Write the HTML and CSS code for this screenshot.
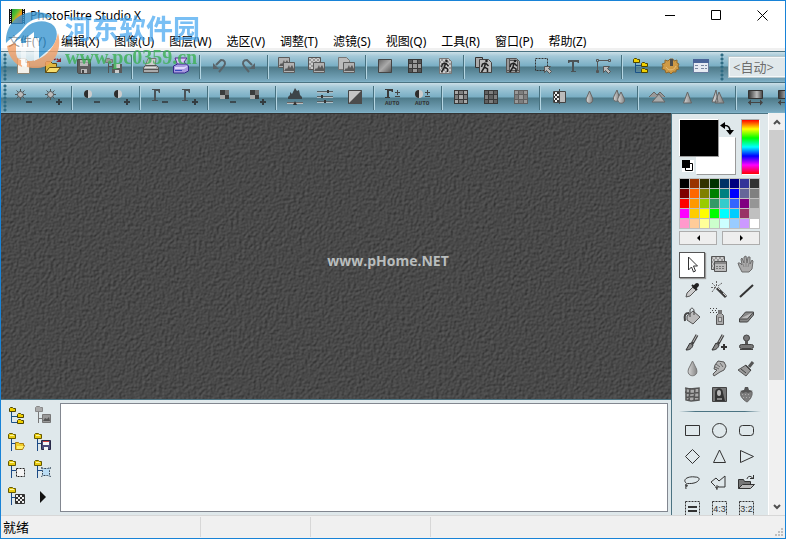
FILE: index.html
```html
<!DOCTYPE html>
<html lang="zh-CN">
<head>
<meta charset="utf-8">
<title>PhotoFiltre Studio X</title>
<link rel="stylesheet" href="styles.css">
</head>
<body>
<svg class="sprite" aria-hidden="true">
<defs>
<linearGradient id="g-metal" x1="0" y1="0" x2="1" y2="1"><stop offset="0" stop-color="#666"/><stop offset=".5" stop-color="#aaa"/><stop offset="1" stop-color="#555"/></linearGradient>
<linearGradient id="g-drop" x1="0" y1="0" x2="1" y2="0"><stop offset="0" stop-color="#d8d8d8"/><stop offset="1" stop-color="#848484"/></linearGradient>
<linearGradient id="g-bar" x1="0" y1="0" x2="1" y2="0"><stop offset="0" stop-color="#333"/><stop offset=".6" stop-color="#bbb"/><stop offset="1" stop-color="#444"/></linearGradient>
<linearGradient id="g-app" x1="0" y1="0" x2="1" y2="1"><stop offset="0" stop-color="#1c9a3a"/><stop offset=".35" stop-color="#5ac030"/><stop offset=".6" stop-color="#f4a01c"/><stop offset="1" stop-color="#e6341a"/></linearGradient>
<pattern id="p-check" width="4" height="4" patternUnits="userSpaceOnUse"><path fill="#ccc" d="M0 0h4v4H0z"/><path fill="#999" d="M0 0h2v2H0zM2 2h2v2H2z"/></pattern>
<pattern id="p-dark" width="4" height="4" patternUnits="userSpaceOnUse"><path fill="#eee" d="M0 0h4v4H0z"/><path fill="#333" d="M0 0h2v2H0zM2 2h2v2H2z"/></pattern>
</defs>
<symbol id="app" viewBox="0 0 16 16"><path fill="#111" d="M0 1h16v15H0z"/><path fill="url(#g-app)" d="M3 1h10v14H3z"/><path stroke="#ddd" stroke-dasharray="1 1" d="M1.500 1v15M14.500 1v15"/></symbol>
<symbol id="minus" viewBox="0 0 24 24"><path fill="#3c4a50" d="M15 15h6v2h-6z"/></symbol>
<symbol id="plus" viewBox="0 0 24 24"><path fill="#333c40" d="M15 15h6v2h-6zM17 13h2v6h-2z"/></symbol>
<symbol id="branch" viewBox="0 0 24 24"><path stroke="#1b4a86" fill="none" d="M7.500 8v9M8 12.500h4M7.500 17v3" /><path fill="#e9cc12" stroke="#665900" d="M4.500 3.500l1-1h3l1 1h2v4h-7z"/><path stroke="#fff59a" d="M6 4.500h4"/></symbol>
<symbol id="image" viewBox="0 0 24 24"><path fill="#b2b2b2" stroke="#5c5c5c" d="M.5.5h11v10H.5z"/><path fill="#5a5a5a" d="M1 9l2-3 1 1 2-4 1 3 2-3 2 4v2z"/></symbol>
<symbol id="man" viewBox="0 0 24 24"><path fill="none" stroke="#222" stroke-width="1.500" d="M6 4L5 8l3 2v3M5 8l-3 5M6 4L3 5 2 8M6 4l3 3"/><circle cx="7" cy="2" r="1.300" fill="#222"/></symbol>
<symbol id="i-new" viewBox="0 0 24 24"><path fill="#f3f1ea" stroke="#8d8777" d="M6.500 3.500h8l4 4v11h-12z"/><path fill="#cfc6b4" stroke="#8d8777" d="M14.500 3.500v4h4z"/></symbol>
<symbol id="i-open" viewBox="0 0 24 24"><path fill="#dfb840" stroke="#5e4a10" d="M4.500 17.500v-10l1-1h4l2 2h4v3"/><path fill="#f7dc6a" stroke="#5e4a10" d="M4.500 17.500l4-5h11l-4 5z"/><path fill="none" stroke="#8c2430" stroke-width="1.400" stroke-dasharray="2 1" d="M13 5c2-2 4-1 5 1"/><path fill="#8c2430" d="M15 7h5V3z"/></symbol>
<symbol id="i-save" viewBox="0 0 24 24"><path fill="#5e5e5e" stroke="#4c4c4c" d="M6.500 4.500h13v14h-12l-1-1z"/><path fill="#b8b8b8" d="M9 5h8v6H9z"/><path fill="#999" d="M9 7h8v1H9z"/><path fill="#b8b8b8" d="M10 14h6v4h-6z"/><path fill="#444" d="M11 15h2v3h-2z"/></symbol>
<symbol id="i-treesave" viewBox="0 0 24 24"><path fill="none" stroke="#555" d="M7.500 8v10M8 11.500h3"/><path fill="#999" stroke="#777" d="M4.500 4.500l1-1h3l1 1h2v3h-7z"/><path fill="#5a5a5a" d="M11 9h10v9H11z"/><path fill="#ccc" d="M13 9h6v4h-6zM14 15h4v3h-4z"/></symbol>
<symbol id="i-print" viewBox="0 0 24 24"><path fill="#ccc" stroke="#777" d="M9 3.500h8l-1 8H6z"/><path fill="#aaa" stroke="#555" d="M4.500 12.500l2-2h11l2 2v5h-15z"/><path stroke="#555" d="M4 14.500h15"/><path stroke="#ddd" d="M6 12.500h11"/></symbol>
<symbol id="i-scan" viewBox="0 0 24 24"><path fill="#d8c8f8" stroke="#5a2890" d="M6 3h12l-3 4 3 4H9z"/><path fill="#a79ae0" stroke="#35288c" d="M4.500 11l4-2h9l2 2v5l-4 2h-11z"/><path fill="#ded8fc" d="M6 12h9l3-1v1l-3 2H6z"/><path fill="#3848b8" d="M6 15h7v1H6z"/></symbol>
<symbol id="i-undo" viewBox="0 0 24 24"><path fill="none" stroke="#59646a" stroke-width="2" d="M9 10l5-5c4 0 5 3 3 6l-5 6"/><path fill="#59646a" d="M6 8v6h6z"/></symbol>
<symbol id="i-redo" viewBox="0 0 24 24"><path fill="none" stroke="#59646a" stroke-width="2" d="M15 10l-5-5C6 5 5 8 7 11l5 6"/><path fill="#59646a" d="M18 8v6h-6z"/></symbol>
<symbol id="i-dup" viewBox="0 0 24 24"><use href="#image" x="3" y="2" width="24" height="24"/><use href="#image" x="8" y="7" width="24" height="24"/></symbol>
<symbol id="i-check" viewBox="0 0 24 24"><path fill="url(#p-check)" stroke="#555" d="M3.500 2.500h12v12h-12z"/><use href="#image" x="8" y="7" width="24" height="24"/></symbol>
<symbol id="i-paste" viewBox="0 0 24 24"><path fill="#bbb" stroke="#777" d="M3.500 2.500h8l3 3v9h-11z"/><use href="#image" x="8" y="7" width="24" height="24"/></symbol>
<symbol id="i-grad" viewBox="0 0 24 24"><path fill="url(#g-metal)" stroke="#444" d="M5.500 4.500h13v13h-13z"/></symbol>
<symbol id="i-grid" viewBox="0 0 24 24"><path fill="#383838" d="M5 4h14v14H5z"/><path fill="#555" d="M6 5h3v3H6zM15 5h3v3h-3zM6 14h3v3H6zM15 14h3v3h-3z"/><path fill="#999" d="M10 5h4v3h-4zM6 9h3v4H6zM15 9h3v4h-3zM10 14h4v3h-4zM10 9h4v4h-4z"/></symbol>
<symbol id="i-grid2" viewBox="0 0 24 24"><path fill="#383838" d="M5 4h14v14H5z"/><path fill="#a8a8a8" d="M6 5h3v3H6zM15 5h3v3h-3zM6 14h3v3H6zM15 14h3v3h-3zM10 9h4v4h-4z"/><path fill="#7e7e7e" d="M10 5h4v3h-4zM6 9h3v4H6zM15 9h3v4h-3zM10 14h4v3h-4z"/></symbol>
<symbol id="i-grid3" viewBox="0 0 24 24"><path fill="#383838" d="M5 4h14v14H5z"/><path fill="#606060" d="M6 5h3v3H6zM15 5h3v3h-3zM6 14h3v3H6zM15 14h3v3h-3zM10 9h4v4h-4z"/><path fill="#7e7e7e" d="M10 5h4v3h-4zM6 9h3v4H6zM15 9h3v4h-3zM10 14h4v3h-4z"/></symbol>
<symbol id="i-grid4" viewBox="0 0 24 24"><path fill="#606060" d="M5 4h14v14H5z"/><path fill="#999" d="M6 5h3v3H6zM15 5h3v3h-3zM6 14h3v3H6zM15 14h3v3h-3zM10 9h4v4h-4z"/><path fill="#7e7e7e" d="M10 5h4v3h-4zM6 9h3v4H6zM15 9h3v4h-3zM10 14h4v3h-4z"/></symbol>
<symbol id="i-man" viewBox="0 0 24 24"><path fill="url(#p-check)" stroke="#777" d="M6.500 3.500h9l3 3v12h-12z"/><use href="#man" x="6.500" y="4" width="24" height="24"/></symbol>
<symbol id="i-man2" viewBox="0 0 24 24"><path fill="#aaa" stroke="#333" d="M4.500 2.500h7v10h-7z"/><path fill="#bbb" stroke="#444" d="M8.500 4.500h9l3 3v10h-12z"/><use href="#man" x="8.500" y="4" width="24" height="24"/></symbol>
<symbol id="i-man3" viewBox="0 0 24 24"><path fill="#999" stroke="#555" d="M5.500 3.500h10l3 3v11h-13z"/><path fill="#bbb" stroke="#555" d="M8.500 5.500h8v10h-8z"/><path stroke="#555" d="M5 15.500h14M8.500 3v15"/><use href="#man" x="7" y="4" width="24" height="24"/></symbol>
<symbol id="arrow" viewBox="0 0 24 24"><path fill="#bbb" stroke="#555" d="M.5.5h6l-2 2 3 3-2 2-3-3-2 2z"/></symbol>
<symbol id="i-sel" viewBox="0 0 24 24"><path fill="none" stroke="#333" stroke-dasharray="2 1" d="M4.500 3.500h12v12h-12z"/><use href="#arrow" x="13" y="11" width="24" height="24"/></symbol>
<symbol id="i-text" viewBox="0 0 24 24"><path fill="#4c5356" d="M7 5h11v3h-1l-1-1h-3v9h2v1h-5v-1h1V7H9L8 8H7z"/></symbol>
<symbol id="i-node" viewBox="0 0 24 24"><path fill="none" stroke="#555" d="M6.500 6v11M8 5.500h10M5.500 4.500h2v2h-2zM17.500 4.500h2v2h-2zM5.500 15.500h2v2h-2z"/><use href="#arrow" x="12" y="11" width="24" height="24"/></symbol>
<symbol id="i-tree" viewBox="0 0 24 24"><path fill="none" stroke="#1b5288" d="M6.500 6v11.500H13M7 10.500h6"/><path fill="#f0d000" stroke="#4e4500" d="M4.500 4.500l1-1h2l1 1h2v3h-6zM12.500 8.500l1-1h2l1 1h2v3h-6zM12.500 14.500l1-1h2l1 1h2v3h-6z"/></symbol>
<symbol id="i-gear" viewBox="0 0 24 24"><path fill="#cf9a45" stroke="#8e6a30" stroke-linejoin="round" d="M11 4h3l1 2 3-1v3l2 1-1 2 1 3-3 1v2h-3l-2 2-2-2-3 1-1-3-3-1 1-3-1-2 3-1V5l3 1z"/><path fill="#4c4c4c" d="M11 4h3v7h-3z"/><path stroke="#e8c07a" fill="none" d="M7 12c2 4 8 4 10-1"/></symbol>
<symbol id="i-win" viewBox="0 0 24 24"><path fill="#e6eaf2" stroke="#667b9d" d="M4.500 4.500h15v13h-15z"/><path fill="#4a6498" d="M4 4h16v4H4z"/><path stroke="#7b88a0" stroke-dasharray="3 1" d="M6 10.500h4M12 10.500h6M6 13.500h4M12 13.500h6"/></symbol>
<symbol id="sun" viewBox="0 0 24 24"><path stroke="#505658" d="M9.500 3v11M4 8.500h11M5.500 4.500l8 8M13.500 4.500l-8 8"/><circle cx="9.500" cy="8.500" r="3" fill="#bbb" stroke="#505658"/></symbol>
<symbol id="i-sunm" viewBox="0 0 24 24"><use href="#sun"/><use href="#minus"/></symbol>
<symbol id="i-sunp" viewBox="0 0 24 24"><use href="#sun"/><use href="#plus"/></symbol>
<symbol id="half" viewBox="0 0 24 24"><circle cx="9" cy="8" r="4" fill="#ccc"/><path fill="#2c2c2c" d="M9 4a4 4 0 0 0 0 8z"/></symbol>
<symbol id="i-conm" viewBox="0 0 24 24"><use href="#half"/><use href="#minus"/></symbol>
<symbol id="i-conp" viewBox="0 0 24 24"><use href="#half"/><use href="#plus"/></symbol>
<symbol id="gamma" viewBox="0 0 24 24"><path fill="#4a5357" d="M5 3h8v4h-1l-1-2H9v9h2v1H5v-1h2V4H5z"/></symbol>
<symbol id="i-gamm" viewBox="0 0 24 24"><use href="#gamma"/><use href="#minus"/></symbol>
<symbol id="i-gamp" viewBox="0 0 24 24"><use href="#gamma"/><use href="#plus"/></symbol>
<symbol id="quad" viewBox="0 0 24 24"><path fill="#3c3c3c" d="M5 4h5v5H5zM10 9h4v4h-4z"/><path fill="#aaa" d="M5 9h5v4H5z"/><path fill="#707070" d="M10 4h4v5h-4z"/></symbol>
<symbol id="i-satm" viewBox="0 0 24 24"><use href="#quad"/><use href="#minus"/></symbol>
<symbol id="i-satp" viewBox="0 0 24 24"><use href="#quad"/><use href="#plus"/></symbol>
<symbol id="i-hist" viewBox="0 0 24 24"><path fill="#3d4549" d="M5 13v-2l2-2V6l2 2 3-6 2 3 2-1 1 5 2 2v2z"/><path stroke="#666" d="M4 16.500h16"/><path stroke="#bbb" d="M4 17.500h16"/><path fill="#333" d="M12 15l-2 4h4z"/></symbol>
<symbol id="i-slide" viewBox="0 0 24 24"><path stroke="#566064" d="M4 5.500h16M4 10.500h16M4 15.500h16"/><path stroke="#aebcc2" d="M4 6.500h16M4 11.500h16M4 16.500h16"/><path fill="#333" d="M14 4h2v3h-2zM8 9h2v3H8zM11 14h2v3h-2z"/></symbol>
<symbol id="i-neg" viewBox="0 0 24 24"><path fill="#c4c4c4" stroke="#444" d="M5.500 4.500h13v13h-13z"/><path fill="#4c4c4c" d="M19 4v14H5z"/></symbol>
<symbol id="auto" viewBox="0 0 24 24"><path stroke="#444" d="M14 6.500h5M16.500 4v5M14 10.500h5"/><text class="auto" x="4" y="19">AUTO</text></symbol>
<symbol id="i-gama" viewBox="0 0 24 24"><path fill="#3a3a3a" d="M4 3h8v3h-1l-1-1H8v6h1v1H4v-1h2V4H4z"/><use href="#auto"/></symbol>
<symbol id="i-cona" viewBox="0 0 24 24"><use href="#half" x="-1"/><use href="#auto"/></symbol>
<symbol id="i-mirror" viewBox="0 0 24 24"><path fill="url(#p-dark)" stroke="#444" d="M6.500 5.500h6v11h-6z"/><path fill="#bbb" stroke="#444" d="M12.500 5.500h6v11h-6z"/><path stroke="#444" d="M12.500 3v15"/></symbol>
<symbol id="i-drop" viewBox="0 0 24 24"><path fill="url(#g-drop)" stroke="#666" d="M12.500 5l-3 7c-2 7 8 7 6 0z"/></symbol>
<symbol id="i-drops" viewBox="0 0 24 24"><path fill="url(#g-drop)" stroke="#666" d="M10 4l-3 6c-3 7 7 7 5 0z"/><path fill="url(#g-drop)" stroke="#666" d="M14 6l-3 6c-2 7 9 7 6 0z"/></symbol>
<symbol id="i-mount" viewBox="0 0 24 24"><path fill="#999" stroke="#666" d="M4 11l5-5 3 3 3-3 5 5"/><path fill="#aaa" stroke="#666" d="M7 16l7-8 6 8z"/></symbol>
<symbol id="i-cone" viewBox="0 0 24 24"><path fill="url(#g-drop)" stroke="#666" d="M12.500 6l-4 11h8z"/></symbol>
<symbol id="i-cones" viewBox="0 0 24 24"><path fill="url(#g-drop)" stroke="#666" d="M11 4L7 16h6zM14 6l-4 11h9z"/></symbol>
<symbol id="i-bar" viewBox="0 0 24 24"><path fill="url(#g-bar)" stroke="#333" d="M5.500 4.500h14v8h-14z"/><path stroke="#444" d="M5 16.500h14"/><path fill="#444" d="M5 16.500l3-3v6zM20 16.500l-3-3v6z"/></symbol>
<symbol id="i-cursor" viewBox="0 0 24 24"><path fill="#fff" stroke="#333" d="M8.500 4v13l3-3 2 5 2-1-2-5h4z"/></symbol>
<symbol id="i-layer" viewBox="0 0 24 24"><path fill="url(#p-check)" stroke="#555" d="M4.500 3.500h13v13h-13z"/><path fill="#bbb" stroke="#555" d="M7.500 8.500h12v10h-12z"/><path fill="#888" d="M8 9h11v2H8z"/><path stroke="#777" stroke-dasharray="2 1" d="M9 13.500h9M9 15.500h8"/></symbol>
<symbol id="i-hand" viewBox="0 0 24 24"><path fill="#aaa" stroke="#6c6c6c" d="M8 19l-3-6-1-3 2 0 2 2-1-6 1-1 2 5V4l2-1 1 7 1-6 2 0v7l2-4 1 1-1 8-3 3z"/><path stroke="#888" fill="none" d="M9 11l1 3M12 10v4M15 10l-1 4"/></symbol>
<symbol id="i-pick" viewBox="0 0 24 24"><path fill="#ccc" stroke="#555" d="M6 18l1-4 6-6 3 3-6 6z"/><path stroke="#222" stroke-width="4" stroke-linecap="round" d="M15 8l2-2"/><path stroke="#222" stroke-width="2" d="M12 6l5 5"/></symbol>
<symbol id="i-wand" viewBox="0 0 24 24"><path stroke="#3c3c3c" stroke-width="3" d="M10 9l9 9"/><path stroke="#ccc" d="M10 8l3 3M16 14l3 3"/><path stroke="#666" stroke-dasharray="2 1" d="M9.500 2v5M4 8.500h5M5 4l4 4M15 4l-4 3M5 13l3-4"/></symbol>
<symbol id="i-line" viewBox="0 0 24 24"><path stroke="#333" stroke-width="2" d="M6 18L19 6"/></symbol>
<symbol id="i-bucket" viewBox="0 0 24 24"><path fill="#bbb" stroke="#555" d="M7 11l6-5 7 6-7 7-6-4z"/><path fill="none" stroke="#444" d="M10 12V5c1-3 4-2 4 1v4"/><path fill="none" stroke="#444" stroke-width="2" d="M9 8c-4 0-5 2-4 8"/></symbol>
<symbol id="i-spray" viewBox="0 0 24 24"><path fill="#aaa" stroke="#555" d="M9.500 10.500l2-2h3l2 2v9h-7z"/><path fill="#777" d="M11 5h4v4h-4zM11 12h4v5h-4z"/><path fill="#ccc" d="M12 13h2v3h-2z"/><path stroke="#444" stroke-dasharray="1 2" d="M3 3.500h8M5 5.500h5M3 7.500h8"/></symbol>
<symbol id="i-eraser" viewBox="0 0 24 24"><path fill="#888" stroke="#444" d="M5.500 14l6-7h8v3l-6 7h-8z"/><path fill="#bbb" stroke="#444" d="M5.500 14h8l6-7"/></symbol>
<symbol id="i-brush" viewBox="0 0 24 24"><path stroke="#444" stroke-width="3" d="M17 4l-5 9"/><path stroke="#bbb" d="M17 4l-4 7"/><path fill="#888" stroke="#333" d="M10 12l3 2c-1 4-4 5-7 5z"/></symbol>
<symbol id="i-brushp" viewBox="0 0 24 24"><path stroke="#444" stroke-width="3" d="M16 4l-5 9"/><path stroke="#bbb" d="M16 4l-4 7"/><path fill="#888" stroke="#333" d="M9 12l3 2c-1 4-4 5-7 5z"/><path fill="#333" d="M14 15h6v2h-6zM16 13h2v6h-2z"/></symbol>
<symbol id="i-stamp" viewBox="0 0 24 24"><circle cx="12.500" cy="7" r="3" fill="#777" stroke="#444"/><path fill="#555" d="M11 10h3v4h-3z"/><rect x="5.500" y="13.500" width="14" height="4" rx="2" fill="#777" stroke="#444"/><path stroke="#444" d="M6 18.500h13"/></symbol>
<symbol id="i-water" viewBox="0 0 24 24"><path fill="url(#g-drop)" stroke="#777" d="M12.500 4l-4 8c-3 9 11 9 8 0z"/></symbol>
<symbol id="i-finger" viewBox="0 0 24 24"><path fill="#b5b5b5" stroke="#555" d="M11 4l6 1 2 4-2 4-4 2-6 4-1-2 4-4-3-1 1-4z"/><path fill="none" stroke="#666" d="M9 7l4 3M13 6l3 4M8 10l4 2"/></symbol>
<symbol id="i-pbrush" viewBox="0 0 24 24"><path stroke="#555" stroke-width="3" d="M19 5l-4 5"/><path fill="#999" stroke="#555" d="M12 8l5 5-5 6-8-6z"/><path stroke="#444" d="M11 8l6 6M7 12l5 4"/></symbol>
<symbol id="i-mesh" viewBox="0 0 24 24"><path fill="#aaa" d="M6 5h13v12H6z"/><path fill="none" stroke="#555" stroke-width="1.500" d="M5 5l5 1 9-1v12l-8 1-5-1V5M10 5l-1 13M15 5l-1 13M5 9.500l6 1 8-1M6 14.500l7-1 6 1"/></symbol>
<symbol id="i-mona" viewBox="0 0 24 24"><path fill="#777" stroke="#444" d="M5.500 4.500h14v14h-14z"/><path fill="#333" d="M8 18V9c1-5 8-5 8 1l2 8z"/><ellipse cx="12" cy="10" rx="2" ry="3" fill="#bbb"/><path fill="#888" d="M10 15h5v2h-5z"/></symbol>
<symbol id="i-berry" viewBox="0 0 24 24"><path fill="#7c7c7c" stroke="#666" d="M7 9c3-2 8-2 11 0 1 4-3 9-5 10-4-2-8-7-6-10z"/><path fill="#555" d="M6 8l4-1 1-3h3l1 3 4 1-5 2-2-1-3 1z"/><path stroke="#aaa" stroke-dasharray="1 2" d="M8 11.500h9M9 14.500h7"/></symbol>
<symbol id="s-rect" viewBox="0 0 24 24"><path d="M5.500 7.500h14v10h-14z"/></symbol>
<symbol id="s-circ" viewBox="0 0 24 24"><circle cx="12.500" cy="12.500" r="7"/></symbol>
<symbol id="s-round" viewBox="0 0 24 24"><rect x="5.500" y="7.500" width="14" height="10" rx="3"/></symbol>
<symbol id="s-dia" viewBox="0 0 24 24"><path d="M12.500 5.500l7 7-7 7-7-7z"/></symbol>
<symbol id="s-tri" viewBox="0 0 24 24"><path d="M12.500 6l6 12.500h-12z"/></symbol>
<symbol id="s-tri2" viewBox="0 0 24 24"><path d="M6.500 6.500l13 6-13 6z"/></symbol>
<symbol id="s-lasso" viewBox="0 0 24 24"><path d="M6 13c-4-4 3-7 9-6 7 0 4 5-1 6-3 1-6 0-8 1-2 3 3 3 1 1-2 0-1 3-1 4"/></symbol>
<symbol id="s-poly" viewBox="0 0 24 24"><path d="M8 16l-4-4 5-4 3 3 6-5v11h-6c-2-2-4-1-3 1 2 1 3-1 1-1-1 1 0 2 0 3"/></symbol>
<symbol id="s-open" viewBox="0 0 24 24"><path fill="#777" d="M4.500 18.500v-9h5l1 2h6v3"/><path fill="#bbb" d="M4.500 18.500l4-4h12l-4 4z"/><path d="M13 9c1-4 5-3 6 0M16 8.500h4M19.500 5v4"/></symbol>
<symbol id="s-eq" viewBox="0 0 24 24"><path stroke-dasharray="2 1" d="M5.500 5.500h14v14h-14z"/><path stroke-width="2" d="M8 11h9M8 15h9"/></symbol>
<symbol id="s-43" viewBox="0 0 24 24"><path stroke-dasharray="2 1" d="M5.500 5.500h14v14h-14z"/><text class="ratio" x="12.500" y="16">4:3</text></symbol>
<symbol id="s-32" viewBox="0 0 24 24"><path stroke-dasharray="2 1" d="M5.500 5.500h14v14h-14z"/><text class="ratio" x="12.500" y="16">3:2</text></symbol>
<symbol id="b-tree" viewBox="0 0 24 24"><path fill="none" stroke="#1b5288" d="M7.500 6v12.500H13M8 12.500h5"/><path fill="#f0d000" stroke="#4e4500" d="M5.500 4.500l1-1h2l1 1h2v3h-6zM13.500 10.500l1-1h2l1 1h2v3h-6zM13.500 16.500l1-1h2l1 1h2v3h-6z"/></symbol>
<symbol id="b-img" viewBox="0 0 24 24"><path fill="none" stroke="#777" d="M8.500 8v11M9 14.500h3"/><path fill="#aaa" stroke="#888" d="M5.500 3.500l1-1h3l1 1h2v4h-7z"/><path fill="#999" stroke="#777" d="M12.500 10.500h8v8h-8z"/><path fill="#555" d="M13 17l2-3 2 1 2-2 1 4z"/></symbol>
<symbol id="b-open" viewBox="0 0 24 24"><use href="#branch"/><path fill="#f2cd28" stroke="#a87c10" d="M11.500 18.500v-7h3l1 1h4v2h1l-2 4z"/><path fill="#fff06c" d="M13 15h7l-2 3h-5z"/></symbol>
<symbol id="b-save" viewBox="0 0 24 24"><use href="#branch"/><path fill="#4c4a78" stroke="#292947" d="M11.500 9.500h9v9h-9z"/><path fill="#f6f6f6" d="M13 10h6v4h-6zM14 16h4v3h-4z"/><path fill="#d04040" d="M13 10h6v1h-6z"/></symbol>
<symbol id="b-sel" viewBox="0 0 24 24"><use href="#branch"/><path fill="#f4f4f4" stroke="#222" stroke-dasharray="2 1" d="M12.500 10.500h8v8h-8z"/></symbol>
<symbol id="b-fill" viewBox="0 0 24 24"><use href="#branch"/><path fill="#b9dcf4" stroke="#345" stroke-dasharray="2 1" d="M11.500 9.500l2 1h4l3-1-1 3v4l1 2-3-1h-4l-2 1 1-2v-4z"/></symbol>
<symbol id="b-check" viewBox="0 0 24 24"><use href="#branch"/><path fill="url(#p-dark)" stroke="#333" d="M11.500 9.500h9v9h-9z"/></symbol>
<symbol id="b-play" viewBox="0 0 24 24"><path fill="#111" d="M10 6l6 6-6 6z"/></symbol>
</svg>

<div class="window">
  <header class="titlebar">
    <svg class="app-icon"><use href="#app"/></svg>
    <h1 class="title">PhotoFiltre Studio X</h1>
    <button class="caption" aria-label="最小化"><svg viewBox="0 0 11 11"><path d="M0 5.500h10"/></svg></button>
    <button class="caption" aria-label="最大化"><svg viewBox="0 0 11 11"><path d="M.5.5h9v9h-9z"/></svg></button>
    <button class="caption" aria-label="关闭"><svg viewBox="0 0 11 11"><path d="M.5.5l10 10M10.500.5l-10 10"/></svg></button>
  </header>
  <nav class="menu">
    <button>文件(Y)</button><button>编辑(X)</button><button>图像(U)</button><button>图层(W)</button><button>选区(V)</button><button>调整(T)</button><button>滤镜(S)</button><button>视图(Q)</button><button>工具(R)</button><button>窗口(P)</button><button>帮助(Z)</button>
  </nav>
  <div class="toolbar">
    <span class="grip"></span>
    <button class="tool" aria-label="新建"><svg><use href="#i-new"/></svg></button>
    <button class="tool" aria-label="打开"><svg><use href="#i-open"/></svg></button>
    <button class="tool" aria-label="保存"><svg><use href="#i-save"/></svg></button>
    <button class="tool" aria-label="另存"><svg><use href="#i-treesave"/></svg></button>
    <span class="sep"></span>
    <button class="tool" aria-label="打印"><svg><use href="#i-print"/></svg></button>
    <button class="tool" aria-label="扫描"><svg><use href="#i-scan"/></svg></button>
    <span class="sep"></span>
    <button class="tool" aria-label="撤销"><svg><use href="#i-undo"/></svg></button>
    <button class="tool" aria-label="重做"><svg><use href="#i-redo"/></svg></button>
    <span class="sep"></span>
    <button class="tool" aria-label="复制图像"><svg><use href="#i-dup"/></svg></button>
    <button class="tool" aria-label="透明图像"><svg><use href="#i-check"/></svg></button>
    <button class="tool" aria-label="粘贴图像"><svg><use href="#i-paste"/></svg></button>
    <span class="sep"></span>
    <button class="tool" aria-label="灰度"><svg><use href="#i-grad"/></svg></button>
    <button class="tool" aria-label="索引颜色"><svg><use href="#i-grid"/></svg></button>
    <button class="tool" aria-label="透明色"><svg><use href="#i-man"/></svg></button>
    <span class="sep"></span>
    <button class="tool" aria-label="图像大小"><svg><use href="#i-man2"/></svg></button>
    <button class="tool" aria-label="画布大小"><svg><use href="#i-man3"/></svg></button>
    <button class="tool" aria-label="选择"><svg><use href="#i-sel"/></svg></button>
    <button class="tool" aria-label="文字"><svg><use href="#i-text"/></svg></button>
    <button class="tool" aria-label="路径"><svg><use href="#i-node"/></svg></button>
    <span class="sep"></span>
    <button class="tool" aria-label="浏览器"><svg><use href="#i-tree"/></svg></button>
    <button class="tool" aria-label="设置"><svg><use href="#i-gear"/></svg></button>
    <button class="tool" aria-label="窗口"><svg><use href="#i-win"/></svg></button>
    <span class="grip grip-mid"></span>
    <select class="zoom" aria-label="缩放"><option>&lt;自动&gt;</option></select>
  </div>
  <div class="toolbar">
    <span class="grip"></span>
    <button class="tool" aria-label="降低亮度"><svg><use href="#i-sunm"/></svg></button>
    <button class="tool" aria-label="提高亮度"><svg><use href="#i-sunp"/></svg></button>
    <span class="sep"></span>
    <button class="tool" aria-label="降低对比度"><svg><use href="#i-conm"/></svg></button>
    <button class="tool" aria-label="提高对比度"><svg><use href="#i-conp"/></svg></button>
    <span class="sep"></span>
    <button class="tool" aria-label="降低伽玛"><svg><use href="#i-gamm"/></svg></button>
    <button class="tool" aria-label="提高伽玛"><svg><use href="#i-gamp"/></svg></button>
    <span class="sep"></span>
    <button class="tool" aria-label="降低饱和度"><svg><use href="#i-satm"/></svg></button>
    <button class="tool" aria-label="提高饱和度"><svg><use href="#i-satp"/></svg></button>
    <span class="sep"></span>
    <button class="tool" aria-label="色阶"><svg><use href="#i-hist"/></svg></button>
    <button class="tool" aria-label="调整滑块"><svg><use href="#i-slide"/></svg></button>
    <button class="tool" aria-label="负片"><svg><use href="#i-neg"/></svg></button>
    <span class="sep"></span>
    <button class="tool" aria-label="自动色阶"><svg><use href="#i-gama"/></svg></button>
    <button class="tool" aria-label="自动对比度"><svg><use href="#i-cona"/></svg></button>
    <span class="sep"></span>
    <button class="tool" aria-label="灰阶"><svg><use href="#i-grid2"/></svg></button>
    <button class="tool" aria-label="旧照片"><svg><use href="#i-grid3"/></svg></button>
    <button class="tool" aria-label="除尘"><svg><use href="#i-grid4"/></svg></button>
    <span class="sep"></span>
    <button class="tool" aria-label="抖动"><svg><use href="#i-mirror"/></svg></button>
    <button class="tool" aria-label="模糊"><svg><use href="#i-drop"/></svg></button>
    <button class="tool" aria-label="更模糊"><svg><use href="#i-drops"/></svg></button>
    <span class="sep"></span>
    <button class="tool" aria-label="浮雕"><svg><use href="#i-mount"/></svg></button>
    <button class="tool" aria-label="锐化"><svg><use href="#i-cone"/></svg></button>
    <button class="tool" aria-label="更锐化"><svg><use href="#i-cones"/></svg></button>
    <span class="sep"></span>
    <button class="tool" aria-label="水平渐变"><svg><use href="#i-bar"/></svg></button>
    <button class="tool" aria-label="垂直渐变"><svg><use href="#i-bar"/></svg></button>
  </div>

  <div class="work">
    <main class="left">
      <div class="canvas">
        <svg class="texture" aria-hidden="true"><filter id="leather" x="0" y="0" width="100%" height="100%" color-interpolation-filters="sRGB"><feTurbulence type="fractalNoise" baseFrequency=".35" numOctaves="2" seed="4" result="n"/><feDiffuseLighting in="n" surfaceScale="0.700" diffuseConstant="0.385" lighting-color="#fff"><feDistantLight azimuth="225" elevation="48"/></feDiffuseLighting></filter><rect width="100%" height="100%" filter="url(#leather)"/></svg>
        <span class="site">www.pHome.NET</span>
      </div>
      <section class="browser">
        <div class="browser-tools">
          <button aria-label="目录树"><svg><use href="#b-tree"/></svg></button>
          <button aria-label="图片"><svg><use href="#b-img"/></svg></button>
          <button aria-label="打开文件夹"><svg><use href="#b-open"/></svg></button>
          <button aria-label="保存文件夹"><svg><use href="#b-save"/></svg></button>
          <button aria-label="选区文件夹"><svg><use href="#b-sel"/></svg></button>
          <button aria-label="蒙版文件夹"><svg><use href="#b-fill"/></svg></button>
          <button aria-label="图案文件夹"><svg><use href="#b-check"/></svg></button>
          <button aria-label="播放"><svg><use href="#b-play"/></svg></button>
        </div>
        <div class="files"></div>
      </section>
    </main>
    <aside class="palette">
      <div class="colors">
        <div class="swatches">
          <button class="back" aria-label="背景色"></button>
          <button class="fore" aria-label="前景色"></button>
          <button class="swap" aria-label="交换颜色"><svg viewBox="0 0 14 14"><path fill="none" stroke="#000" stroke-width="1.500" d="M3 4.500h2c4 0 5 2 5 6"/><path d="M0 4.500L5 1v7zM6 9h8l-4 5z"/></svg></button>
          <button class="reset" aria-label="默认颜色"><svg viewBox="0 0 12 12"><path fill="#fff" stroke="#000" d="M3.500 3.500h7v7h-7z"/><path d="M0 0h8v8H0z"/></svg></button>
        </div>
        <button class="hue" aria-label="色相"></button>
      </div>
      <div class="grid-colors" id="grid-colors"></div>
      <div class="pager">
        <button aria-label="上一页"><svg viewBox="0 0 3 6"><path d="M3 0v6L0 3z"/></svg></button>
        <button aria-label="下一页"><svg viewBox="0 0 3 6"><path d="M0 0v6l3-3z"/></svg></button>
      </div>
      <div class="tools">
        <button class="active" aria-label="选择"><svg><use href="#i-cursor"/></svg></button>
        <button aria-label="图层"><svg><use href="#i-layer"/></svg></button>
        <button aria-label="移动"><svg><use href="#i-hand"/></svg></button>
        <button aria-label="吸管"><svg><use href="#i-pick"/></svg></button>
        <button aria-label="魔棒"><svg><use href="#i-wand"/></svg></button>
        <button aria-label="直线"><svg><use href="#i-line"/></svg></button>
        <button aria-label="填充"><svg><use href="#i-bucket"/></svg></button>
        <button aria-label="喷枪"><svg><use href="#i-spray"/></svg></button>
        <button aria-label="橡皮擦"><svg><use href="#i-eraser"/></svg></button>
        <button aria-label="画笔"><svg><use href="#i-brush"/></svg></button>
        <button aria-label="高级画笔"><svg><use href="#i-brushp"/></svg></button>
        <button aria-label="图章"><svg><use href="#i-stamp"/></svg></button>
        <button aria-label="模糊"><svg><use href="#i-water"/></svg></button>
        <button aria-label="涂抹"><svg><use href="#i-finger"/></svg></button>
        <button aria-label="润饰"><svg><use href="#i-pbrush"/></svg></button>
        <button aria-label="变形"><svg><use href="#i-mesh"/></svg></button>
        <button aria-label="艺术"><svg><use href="#i-mona"/></svg></button>
        <button aria-label="喷图"><svg><use href="#i-berry"/></svg></button>
      </div>
      <hr class="rule">
      <div class="tools shapes">
        <button aria-label="矩形"><svg><use href="#s-rect"/></svg></button>
        <button aria-label="椭圆"><svg><use href="#s-circ"/></svg></button>
        <button aria-label="圆角矩形"><svg><use href="#s-round"/></svg></button>
        <button aria-label="菱形"><svg><use href="#s-dia"/></svg></button>
        <button aria-label="三角形"><svg><use href="#s-tri"/></svg></button>
        <button aria-label="右三角形"><svg><use href="#s-tri2"/></svg></button>
        <button aria-label="套索"><svg><use href="#s-lasso"/></svg></button>
        <button aria-label="多边形"><svg><use href="#s-poly"/></svg></button>
        <button aria-label="载入选区"><svg><use href="#s-open"/></svg></button>
        <button aria-label="相等比例"><svg><use href="#s-eq"/></svg></button>
        <button aria-label="4:3"><svg><use href="#s-43"/></svg></button>
        <button aria-label="3:2"><svg><use href="#s-32"/></svg></button>
      </div>
    </aside>
    <div class="scroll">
      <button aria-label="向上"><svg viewBox="0 0 8 6"><path d="M1 5l3-3 3 3"/></svg></button>
      <div class="track"><div class="thumb"></div></div>
      <button aria-label="向下"><svg viewBox="0 0 8 6"><path d="M1 1l3 3 3-3"/></svg></button>
    </div>
  </div>

  <footer class="status">
    <span class="cell">就绪</span><span class="cell narrow"></span><span class="cell wide"></span><span class="cell rest"></span>
    <svg class="resize" viewBox="0 0 9 9"><path d="M6 0h2v2H6zM3 3h2v2H3zM6 3h2v2H6zM0 6h2v2H0zM3 6h2v2H3zM6 6h2v2H6z"/></svg>
  </footer>

  <div class="mark">
    <svg class="mark-logo" viewBox="0 0 58 58"><circle cx="28" cy="29" r="26" fill="#fff" opacity=".75"/><path fill="#3b97d2" d="M1 32C0 14 13 1 30 1c8 0 14 2 19 6C34 5 24 9 19 16 15 22 8 25 1 32z"/><path fill="#3b97d2" d="M24 14c8-5 19-5 25 1 5 6 3 16-3 22L34 47V27h-5v-6l-8 6v5h-5v-5l-7 4c4-4 9-12 15-17z"/><path fill="#f4a066" d="M2 35l9-3v8c0 7 3 9 6 9v7C9 53 3 44 2 35zM22 50c14 1 27-10 31-28 5 18-5 34-20 35-4 0-8 0-11-1z"/><path fill="#fff" d="M16 32h5v24l-5-2zM29 27h5v20l-5 3zM16 44l5-1v6h-5z" opacity=".9"/></svg>
    <div class="mark-text"><strong>河东软件园</strong><em>www.pc0359.cn</em></div>
  </div>
</div>
<script src="palette.js"></script>
</body>
</html>
```
FILE: styles.css
```css
* { box-sizing: border-box; }
html, body { height: 100%; margin: 0; }
body { font-family: "Noto Sans", "Noto Sans CJK SC", sans-serif; font-size: 12px; color: #000; overflow: hidden; }
button { padding: 0; border: 0; background: none; font: inherit; color: inherit; display: flex; align-items: center; justify-content: center; }
svg { display: block; flex: none; }
.sprite { position: absolute; width: 0; height: 0; }
.auto { font: bold 6px "Liberation Mono", monospace; fill: #333; }
.ratio { font: 9px "Liberation Sans", sans-serif; fill: #333; stroke: none; text-anchor: middle; }

.window { position: relative; height: 100vh; display: flex; flex-direction: column; border: 1px solid #1883d7; background: #fff; overflow: hidden; }
.titlebar { flex: none; display: flex; align-items: center; height: 29px; padding-left: 8px; }
.app-icon { width: 16px; height: 16px; }
.title { flex: 1; margin: 0 0 0 5px; font-size: 12px; font-weight: 400; }
.caption { width: 46px; height: 29px; }
.caption svg { width: 11px; height: 11px; fill: none; stroke: #000; }
.menu { flex: none; display: flex; height: 21px; background: linear-gradient(#fff 18px, #f0f0f0 18px); }
.menu button { padding: 0 8px 0 7px; white-space: nowrap; }

.toolbar { flex: none; display: flex; align-items: center; height: 31px; border-top: 1px solid #4b7382; overflow: hidden; background: linear-gradient(#cbdfe7, #a5c9d8 4px, #79aec4 14px, #4e7a89 15px, #79a9bf 29px, #86bacf); }
.toolbar > * { flex: none; }
.grip { width: 7px; height: 28px; background: radial-gradient(circle, #2f6c84 1px, transparent 2px) 2px 0 / 4px 4px repeat-y; }
.grip-mid { width: 12px; background-position: 4px 0; }
.tool { width: 30px; height: 30px; }
.tool svg, .tools svg, .browser-tools svg { width: 24px; height: 24px; }
.sep { width: 8px; height: 24px; background: linear-gradient(90deg, transparent 3px, #47717f 3px 4px, #b4d5e2 4px 5px, transparent 5px); }
.zoom { appearance: none; width: 80px; height: 22px; padding: 0 4px; border: 1px solid #b9c8cd; border-radius: 0; background: #e0e8eb; color: #6d6d6d; font: 13px "Noto Sans", "Noto Sans CJK SC", sans-serif; outline: 1px solid #f4f8f9; outline-offset: -2px; }

.work { flex: 1; min-height: 0; display: flex; background: #dfe8eb; }
.left { flex: 1; min-width: 0; display: flex; flex-direction: column; }
.canvas { position: relative; flex: 1; display: flex; align-items: center; justify-content: center; background: #494949; overflow: hidden; border-top: 1px solid #333; }
.texture { position: absolute; inset: 0; width: 100%; height: 100%; }
.site { position: relative; margin: 8px 0 0 104px; font: bold 14px "Open Sans", sans-serif; color: #b9bdbd; }
.browser { flex: none; display: flex; height: 116px; padding: 3px 3px 3px 2px; border-top: 1px solid #4b7382; }
.browser-tools { display: grid; grid-template-columns: 26px 26px; grid-auto-rows: 27px; align-content: start; width: 57px; margin-top: -1px; }
.files { flex: 1; background: #fff; border: 1px solid #828790; }

.palette { flex: none; width: 97px; padding: 6px 7px 0; border-left: 1px solid #4b7382; box-shadow: inset 0 1px #4b7382; overflow: hidden; background: #dfe8eb; }
.colors { display: flex; justify-content: space-between; height: 56px; width: 81px; }
.swatches { position: relative; width: 57px; }
.fore, .back { position: absolute; width: 40px; height: 38px; border: 1px solid #fff; border-right-color: #9a9a9a; border-bottom-color: #9a9a9a; }
.fore { left: 0; top: 0; background: #000; }
.back { left: 17px; top: 18px; background: #fff; }
.swap { position: absolute; left: 41px; top: 2px; width: 14px; height: 14px; }
.swap svg { width: 14px; height: 14px; }
.reset { position: absolute; left: 3px; top: 41px; width: 12px; height: 12px; background: #fff; }
.reset svg { width: 12px; height: 12px; }
.hue { width: 19px; height: 56px; border: 1px solid #aaa; border-right-color: #fff; border-bottom-color: #fff; background: linear-gradient(#f00, #ff0, #0f0, #0ff, #00f, #f0f, #f00); }
.grid-colors { display: grid; grid-template-columns: repeat(8, 9px); grid-auto-rows: 9px; gap: 1px; width: 81px; margin-top: 3px; padding: 1px; background: #c0c0c0; }
.pager { display: flex; justify-content: space-between; width: 81px; margin: 2px 0 7px; }
.pager button { width: 38px; height: 14px; border: 1px solid #adadad; background: #eee; }
.pager svg { width: 3px; height: 6px; }
.tools { display: grid; grid-template-columns: repeat(3, 27px); grid-auto-rows: 26px; }
.tools .active { width: 26px; background: #fff; border: 1px solid #555; box-shadow: 1px 1px 1px #999; }
.rule { height: 1px; margin: 3px 0 5px; border: 0; background: linear-gradient(90deg, transparent, #4b7382 20%, #4b7382 80%, transparent); }
.shapes svg { fill: none; stroke: #333; }
.tools { margin-left: -1px; }
.tools .active { margin-left: 1px; }

.scroll { flex: none; width: 17px; display: flex; flex-direction: column; border-left: 1px solid #fff; background: #f0f0f0; }
.scroll button { height: 17px; width: 15px; }
.scroll svg { width: 8px; height: 6px; fill: none; stroke: #505050; stroke-width: 2; }
.track { flex: 1; }
.thumb { width: 15px; height: 68%; background: #cdcdcd; }

.status { flex: none; display: flex; align-items: center; height: 23px; border-top: 1px solid #d7d7d7; background: #f0f0f0; font-size: 13px; }
.cell { width: 200px; height: 20px; line-height: 20px; padding-left: 2px; border-right: 1px solid #d7d7d7; }
.narrow { width: 110px; }
.wide { width: 120px; }
.rest { flex: 1; border: 0; }
.resize { align-self: flex-end; width: 9px; height: 9px; margin: 0 1px 1px 0; fill: #bfbfbf; }

.mark { position: absolute; left: 4px; top: 10px; display: flex; pointer-events: none; opacity: .8; }
.mark-logo { width: 58px; height: 58px; }
.mark-text { display: flex; flex-direction: column; padding: 1px 0 0 2px; }
.mark-text strong { font: 700 27px/32px "Noto Sans CJK SC", sans-serif; color: #45a6f0; opacity: .9; }
.mark-text em { margin-top: 2px; font: normal bold 20px/22px "Liberation Serif", serif; color: #3cb054; }
```
FILE: palette.js
```js
const colors = [
  '#000000', '#993300', '#333300', '#003300', '#003366', '#000080', '#333399', '#333333',
  '#800000', '#ff6600', '#808000', '#008000', '#008080', '#0000ff', '#666699', '#808080',
  '#ff0000', '#ff9900', '#99cc00', '#339966', '#33cccc', '#3366ff', '#800080', '#969696',
  '#ff00ff', '#ffcc00', '#ffff00', '#00ff00', '#00ffff', '#00ccff', '#993366', '#c0c0c0',
  '#ff99cc', '#ffcc99', '#ffff99', '#ccffcc', '#ccffff', '#99ccff', '#cc99ff', '#ffffff'
];
const grid = document.getElementById('grid-colors');
for (const color of colors) {
  const button = document.createElement('button');
  button.style.background = color;
  button.setAttribute('aria-label', color);
  grid.append(button);
}
```
